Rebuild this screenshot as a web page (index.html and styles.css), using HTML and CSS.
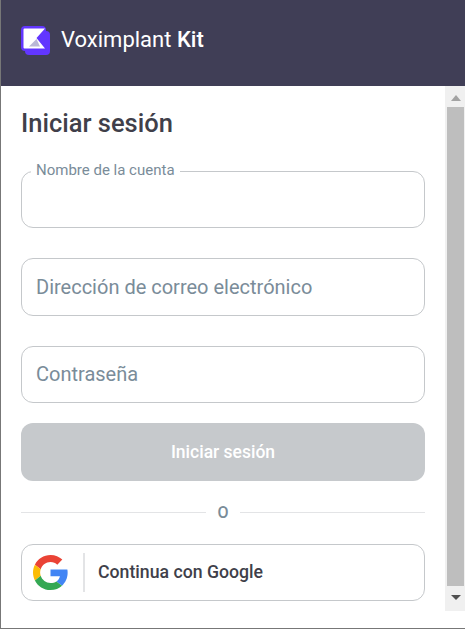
FILE: index.html
```html
<!DOCTYPE html>
<html lang="es">
<head>
  <meta charset="UTF-8" />
  <title>Voximplant Kit</title>
  <link rel="stylesheet" href="styles.css">
</head>
<body>
  <div class="frame">
    <header class="topbar">
      <svg class="logo" width="29" height="29" viewBox="0 0 29 29">
        <rect x="4" y="5" width="25" height="24" rx="4" fill="#6236ff"/>
        <rect x="0" y="0" width="25" height="25" rx="4" fill="#6236ff"/>
        <path d="M2.500 3.500a1 1 0 0 1 1-1H24L15.500 12 24 22.500H3.500a1 1 0 0 1-1-1z" fill="#fff"/>
        <path d="M8 20.500L15.500 13 19 20.500z" fill="#b9b7d6"/>
      </svg>
      <span class="brand">Voximplant <b>Kit</b></span>
    </header>

    <div class="content">
      <main class="panel">
        <h1>Iniciar sesión</h1>

        <div class="field">
          <label class="float-label">Nombre de la cuenta</label>
          <input type="text" />
        </div>
        <div class="field">
          <input type="text" placeholder="Dirección de correo electrónico" />
        </div>
        <div class="field field-last">
          <input type="password" placeholder="Contraseña" />
        </div>

        <button class="submit" disabled>Iniciar sesión</button>

        <div class="divider"><span>O</span></div>

        <button class="google">
          <span class="google-icon">
            <svg width="35" height="35" viewBox="0 0 48 48">
              <path fill="#ea4335" d="M24 9.500c3.900 0 6.900 1.500 9.300 3.700l6.900-6.900C36 2.400 30.500 0 24 0 14.600 0 6.500 5.400 2.600 13.200l8 6.200C12.500 13.700 17.800 9.500 24 9.500z"/>
              <path fill="#4285f4" d="M47.500 24.500c0-1.600-.1-3.100-.4-4.500H24v9h12.900c-.6 3-2.300 5.500-4.800 7.200l7.700 6c4.500-4.200 7.700-10.300 7.700-17.700z"/>
              <path fill="#fbbc05" d="M10.600 28.600c-.5-1.400-.8-3-.8-4.600s.3-3.200.8-4.600l-8-6.200C.9 16.500 0 20.100 0 24s.9 7.500 2.600 10.800z"/>
              <path fill="#34a853" d="M24 48c6.500 0 11.900-2.100 15.800-5.800l-7.700-6c-2.200 1.400-4.900 2.300-8.100 2.300-6.200 0-11.500-4.200-13.400-9.900l-8 6.200C6.500 42.600 14.600 48 24 48z"/>
            </svg>
          </span>
          <span class="google-text">Continua con Google</span>
        </button>
      </main>

      <div class="scrollbar">
        <span class="arrow arrow-up"></span>
        <span class="thumb"></span>
        <span class="arrow arrow-down"></span>
      </div>
    </div>
  </div>
</body>
</html>
```

FILE: styles.css
```css
* {
  box-sizing: border-box;
}
html, body {
  margin: 0;
  height: 100%;
  background: #fff;
}
body {
  font-family: "Roboto", "Liberation Sans", sans-serif;
  color: #403f4a;
}
.frame {
  display: flex;
  flex-direction: column;
  height: 629px;
  border-left: 1px solid #777;
  border-bottom: 1px solid #777;
}
.topbar {
  display: flex;
  align-items: center;
  gap: 11px;
  height: 86px;
  flex: none;
  padding: 0 0 6px 20px;
  background: #403e56;
  color: #fff;
}
.logo {
  flex: none;
}
.brand {
  font-size: 22px;
  line-height: 26px;
}
.brand b {
  font-weight: 500;
}
.content {
  display: flex;
  flex: 1;
  min-height: 0;
}
.panel {
  flex: 1;
  padding: 0 20px;
}
h1 {
  margin: 23px 0 32.600px;
  font-size: 25.500px;
  line-height: 29px;
  font-weight: 500;
  color: #403f4a;
}
.field {
  position: relative;
  margin-bottom: 30px;
}
.field-last {
  margin-bottom: 20px;
}
.field input {
  display: block;
  width: 100%;
  height: 57.500px;
  padding: 0 14px;
  border: 1px solid #c5c8cb;
  border-radius: 12px;
  background: #fff;
  font: 20px "Roboto", sans-serif;
  color: #403f4a;
}
.field input::placeholder {
  color: #7a8c99;
  opacity: 1;
}
.float-label {
  position: absolute;
  left: 10px;
  top: -9px;
  padding: 0 5px;
  background: #fff;
  font-size: 15px;
  line-height: 17px;
  color: #7a8c99;
}
.submit {
  display: block;
  width: 100%;
  height: 57.500px;
  border: none;
  border-radius: 12px;
  background: #c6c9cc;
  color: #fff;
  font: 500 17.500px "Roboto", sans-serif;
}
.divider {
  display: flex;
  align-items: center;
  gap: 11px;
  height: 20px;
  margin: 22px 0 21px;
  font-size: 16px;
  font-weight: 500;
  color: #7a8c99;
}
.divider::before,
.divider::after {
  content: "";
  flex: 1;
  height: 1px;
  background: #e3e4e6;
}
.google {
  display: flex;
  align-items: center;
  width: 100%;
  height: 57px;
  padding: 0 0 0 11px;
  border: 1px solid #c5c8cb;
  border-radius: 12px;
  background: #fff;
  font-family: inherit;
}
.google-icon {
  display: flex;
  align-items: center;
  height: 39px;
  padding-right: 15px;
  border-right: 2px solid #e3e4e6;
}
.google-text {
  padding-left: 13px;
  font-size: 17.700px;
  font-weight: 500;
  color: #403f4a;
}
.scrollbar {
  display: flex;
  flex-direction: column;
  flex: none;
  align-items: center;
  width: 20px;
  height: 525px;
  padding: 0 1px 0 2px;
  background: #f0f0f0;
}
.arrow {
  flex: none;
  width: 0;
  height: 0;
  border-left: 5px solid transparent;
  border-right: 5px solid transparent;
}
.arrow-up {
  margin: 9px 0 6px;
  border-bottom: 6px solid #a3a3a3;
}
.arrow-down {
  margin: 9px 0 11px;
  border-top: 5px solid #505050;
}
.thumb {
  flex: 1;
  width: 100%;
  background: #bebebe;
}
```
